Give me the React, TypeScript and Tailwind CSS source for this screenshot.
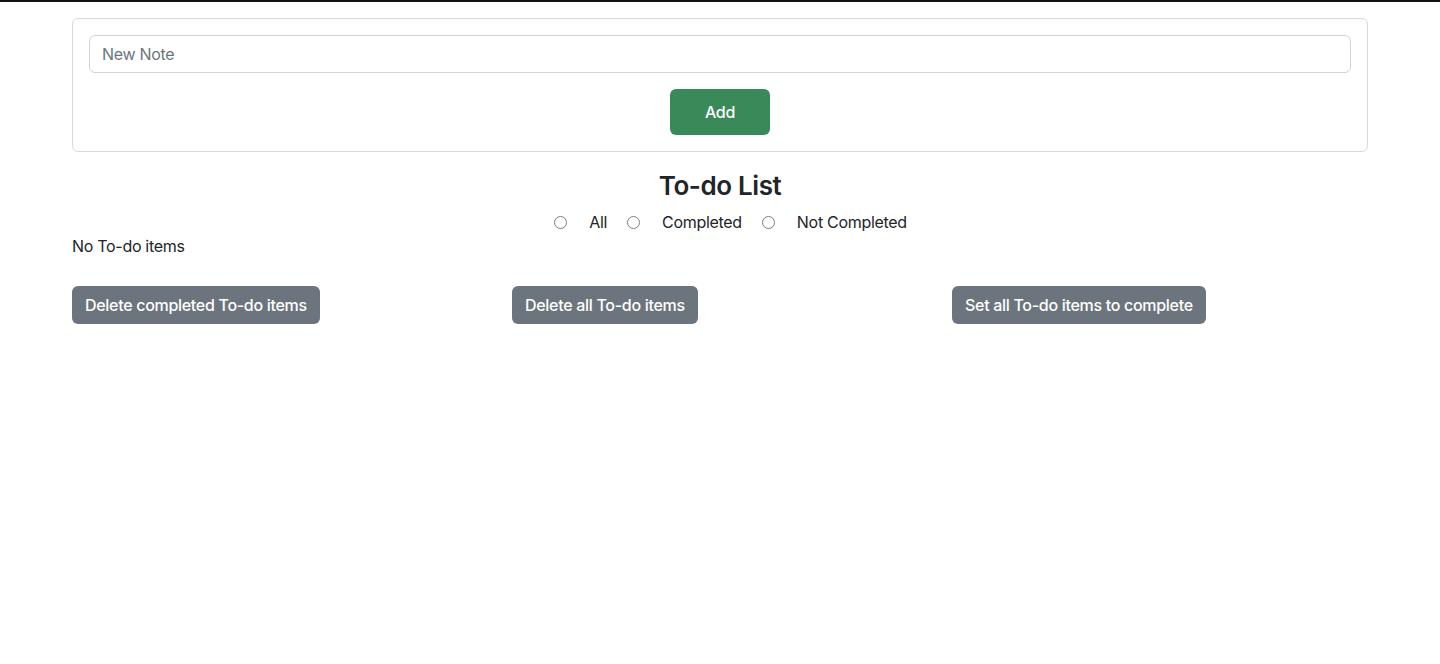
import React, { useState } from 'react';

type Filter = 'all' | 'completed' | 'notCompleted';

const filters: { key: Filter; label: string }[] = [
  { key: 'all', label: 'All' },
  { key: 'completed', label: 'Completed' },
  { key: 'notCompleted', label: 'Not Completed' },
];

const actions = ['Delete completed To-do items', 'Delete all To-do items', 'Set all To-do items to complete'];

const App: React.FC = () => {
  const [note, setNote] = useState('');
  const [filter, setFilter] = useState<Filter | null>(null);

  return (
    <div className="min-h-screen bg-white text-[#212529] font-['Inter','Liberation_Sans',sans-serif] text-base tracking-[-0.3px]">
      <div className="h-[2px] bg-[#111]" />
      <div className="max-w-[1320px] mx-auto px-3 pt-4">
        {/* New note card */}
        <div className="border border-[#d9d9d9] rounded-md p-4">
          <input
            value={note}
            onChange={(e) => setNote(e.target.value)}
            placeholder="New Note"
            className="w-full h-[38px] px-3 border border-[#d4d4d4] rounded-md text-base tracking-[-0.3px] placeholder:text-[#6c757d] outline-none"
          />
          <div className="flex justify-center mt-4">
            <button className="w-[100px] h-[46px] rounded-md bg-[#3a8a59] text-white text-base font-medium">Add</button>
          </div>
        </div>

        <h3 className="text-center text-[26px] leading-[1.2] font-semibold tracking-[-0.4px] mt-[18px] mb-[9px]">To-do List</h3>

        <div className="flex justify-center items-center h-6 pl-[21px]">
          {filters.map((f) => (
            <label key={f.key} className="flex items-center mr-[20px] last:mr-0 cursor-pointer" onClick={() => setFilter(f.key)}>
              <span
                className={`w-[13px] h-[13px] rounded-full border-[1.5px] border-[#7f7f7f] mr-[22px] ${filter === f.key ? 'bg-[#0d6efd] border-[#0d6efd]' : ''}`}
              />
              <span>{f.label}</span>
            </label>
          ))}
        </div>

        <div className="h-6 leading-6">No To-do items</div>

        <div className="grid grid-cols-3 gap-6 mt-7">
          {actions.map((a) => (
            <div key={a}>
              <button className="h-[38px] px-[13px] rounded-md bg-[#6c757d] text-white text-base font-medium">{a}</button>
            </div>
          ))}
        </div>
      </div>
    </div>
  );
};

export default App;
